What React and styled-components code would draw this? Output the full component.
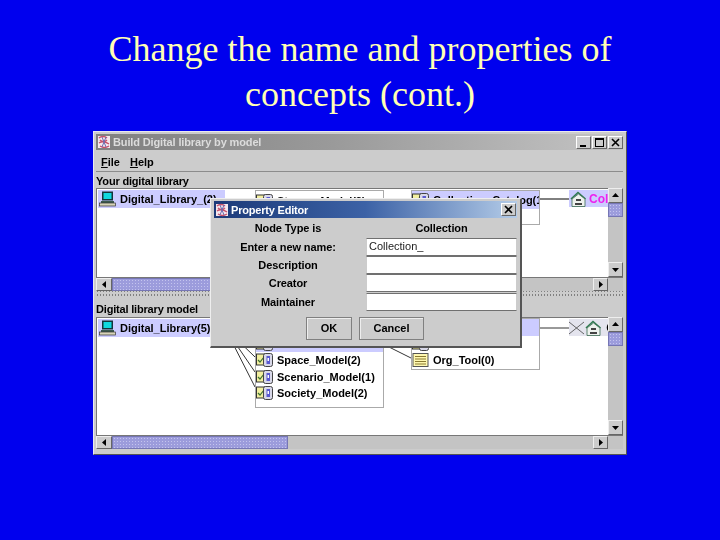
import React from "react";
import styled, { createGlobalStyle } from "styled-components";

const Global = createGlobalStyle`
  html, body { margin: 0; padding: 0; background: #0000ee; }
`;

const Slide = styled.div`
  width: 720px; height: 540px; background: #0000ee; overflow: hidden;
  display: flex; flex-direction: column; align-items: center;
`;
const Heading = styled.h1`
  margin: 27px 0 0; height: 104px; width: 720px; text-align: center;
  font: 400 36px/45px "Liberation Serif", serif; color: #ffffb4;
`;
const Win = styled.div`
  position: relative; box-sizing: border-box; width: 534px; height: 324px;
  padding: 2px 3px 3px 2px; background: #cccccc;
  border-top: 1px solid #e8e8f0; border-left: 1px solid #e8e8f0;
  border-right: 1px solid #555; border-bottom: 1px solid #555;
  display: flex; flex-direction: column;
  font-family: "Liberation Sans", Arial, sans-serif; color: #000;
  filter: blur(0.3px);
`;
const TitleBar = styled.div`
  height: 16px; flex: none; display: flex; align-items: center; gap: 1px; padding-left: 1px;
  background: linear-gradient(90deg, #808080 0%, #9a9a9a 45%, #c4c4c4 100%);
  color: #dcdcdc; font-size: 11px; font-weight: 700;
`;
const TitleText = styled.span`flex: 1; white-space: nowrap; margin-left: 1px; letter-spacing: -0.13px;`;
const WinBtn = styled.span`
  box-sizing: border-box; width: 15px; height: 13px; flex: none;
  background: #cccccc; border: 1px solid; border-color: #fff #666 #666 #fff;
  display: flex; align-items: center; justify-content: center;
`;
const MenuBar = styled.div`
  height: 22px; flex: none; display: flex; align-items: center; gap: 10px; padding: 2px 0 0 5px;
  font-size: 11px; font-weight: 700; box-sizing: border-box; border-bottom: 1px solid #8c8c8c;
`;
const MenuItem = styled.span`&::first-letter { text-decoration: underline; }`;
const Section = styled.div`flex: none; display: flex; flex-direction: column;`;
const SectionLabel = styled.div`
  box-sizing: border-box; height: ${p => p.$h}px; padding-top: ${p => p.$top || 0}px;
  display: flex; align-items: center;
  font-size: 11px; font-weight: 700; white-space: nowrap; letter-spacing: -0.18px;
`;
const PaneRow = styled.div`display: flex; height: ${p => p.$h}px;`;
const Canvas = styled.div`
  position: relative; flex: 1; background: #fff; overflow: hidden;
  border-top: 1px solid #777; border-left: 1px solid #777;
`;
const VBar = styled.div`
  width: 15px; flex: none; display: flex; flex-direction: column; background: #c4c4c4;
`;
const HBar = styled.div`height: 14px; box-sizing: border-box; display: flex; background: #c4c4c4; border-top: 1px solid #777;`;
const Arrow = styled.span`
  box-sizing: border-box; width: ${p => p.$w}px; height: ${p => p.$hh}px; flex: none;
  background: #cccccc; border: 1px solid; border-color: #eee #666 #666 #eee;
  display: flex; align-items: center; justify-content: center;
`;
const Corner = styled.span`width: 15px; flex: none;`;
const Track = styled.div`flex: 1; display: flex; flex-direction: ${p => (p.$v ? "column" : "row")};`;
const Thumb = styled.div`
  flex: none; width: ${p => (p.$v ? "auto" : p.$len + "px")};
  height: ${p => (p.$v ? p.$len + "px" : "auto")};
  background-color: #9c9cdc;
  background-image: radial-gradient(#c4c4ee 0.6px, transparent 0.8px);
  background-size: 3px 3px;
  border: 1px solid #7676b4; box-sizing: border-box;
`;
const Divider = styled.div`
  height: ${p => p.$h}px; flex: none; background-color: #cccccc;
  background-image: radial-gradient(#808080 0.7px, transparent 0.9px);
  background-size: 3px 5px; background-position: 0 2px;
`;
const Node = styled.div`
  position: absolute; box-sizing: border-box; left: ${p => p.$x}px; top: ${p => p.$y}px; width: ${p => p.$w}px;
  height: ${p => p.$h}px; background: ${p => p.$bg || "#fff"};
  border: ${p => (p.$plain ? "none" : "1px solid #aaa")}; overflow: hidden;
`;
const Row = styled.div`
  height: ${p => p.$h || 16.5}px; display: flex; align-items: center; gap: ${p => p.$gap ?? 3}px; white-space: nowrap;
  font-size: ${p => p.$fs || 11}px; font-weight: 700; padding-left: ${p => p.$pad || 0}px;
  background: ${p => (p.$on ? "#ccccff" : "transparent")}; color: ${p => p.$c || "#000"};
`;
const Wires = styled.svg`position: absolute; left: 0; top: 0; width: 100%; height: 100%;`;
const Dialog = styled.div`
  position: absolute; left: 116px; top: 66px; width: 312px; height: 150px; box-sizing: border-box;
  background: #cccccc; padding: 2px 3px 0;
  border-top: 1px solid #eee; border-left: 1px solid #eee; border-right: 2px solid #555; border-bottom: 2px solid #555;
  font-family: "Liberation Sans", Arial, sans-serif; display: flex; flex-direction: column;
`;
const DialogTitle = styled.div`
  height: 17px; flex: none; display: flex; align-items: center; gap: 2px; padding: 0 1px 0 1px;
  background: linear-gradient(90deg, #1c3a78 0%, #3c62a6 50%, #b4cce8 100%);
  color: #fff; font-size: 11px; font-weight: 700;
`;
const DialogName = styled.span`flex: 1; letter-spacing: -0.2px;`;
const Grid = styled.div`
  display: grid; grid-template-columns: 152px 151px; grid-auto-rows: 18.4px;
  font-size: 11px; font-weight: 700; margin-top: 1px; align-items: center; text-align: center;
`;
const Lbl = styled.div`white-space: nowrap; letter-spacing: -0.1px; padding-right: 4px;`;
const LblValue = styled.div`white-space: nowrap; letter-spacing: -0.1px; margin-top: -1px;`;
const Field = styled.div`
  box-sizing: border-box; height: 18px; background: #fff; border: 1px solid;
  border-color: #707070 #ccc #707070 #ccc; font-weight: 400; font-size: 11px; text-align: left; padding: 0 0 0 2px;
  color: #222; line-height: 15px;
`;
const Buttons = styled.div`display: flex; gap: 7px; margin: 6px 0 0 92px;`;
const Btn = styled.div`
  box-sizing: border-box; height: 23px; width: ${p => p.$w}px; display: flex; align-items: center; justify-content: center;
  border: 1px solid #808080; box-shadow: inset 1px 1px 0 #eee; font-size: 11px; font-weight: 700; background: #cccccc;
`;

const AppIcon = ({ s = 14 }) => (
  <svg width={s} height={s} viewBox="0 0 14 14" style={{ flex: "none" }}>
    <rect x="1" y="1" width="12" height="12" fill="#f4e8ee" />
    <path d="M2 3c2-2 6-2 8 0M3 5c2 2 5 2 7 0M2 8c3-2 7-1 10 1M3 11c3 2 6 2 9 0" stroke="#c8506a" strokeWidth="1.4" fill="none" />
    <path d="M5 2l4 10M9 2L5 12" stroke="#6a6ab0" strokeWidth="1" />
  </svg>
);
const Computer = () => (
  <svg width="17" height="16" viewBox="0 0 17 16" style={{ flex: "none" }}>
    <rect x="3" y="0.5" width="11" height="9" fill="#14343c" />
    <rect x="4.5" y="2" width="8" height="6" fill="#10d8e0" />
    <rect x="2" y="10" width="13" height="2" fill="#3c5a50" />
    <rect x="0.5" y="12" width="16" height="3" fill="#d8d4b8" stroke="#333" strokeWidth="0.7" />
  </svg>
);
const Folder = () => (
  <svg width="18" height="16" viewBox="0 0 18 16" style={{ flex: "none" }}>
    <rect x="0.5" y="2" width="9" height="11" fill="#f2efa0" stroke="#333" />
    <path d="M2 8l2 2 4-5" stroke="#3c7030" strokeWidth="1.2" fill="none" />
    <rect x="7.5" y="1.5" width="9" height="13" rx="2" fill="#d8d8e8" stroke="#444" />
    <rect x="10.5" y="4" width="3.5" height="8" fill="#5a5ad0" />
    <rect x="11.5" y="6" width="1.5" height="3" fill="#fff" />
  </svg>
);
const Note = () => (
  <svg width="17" height="16" viewBox="0 0 17 16" style={{ flex: "none" }}>
    <rect x="1" y="1.5" width="15" height="13" fill="#fff8b0" stroke="#555" />
    <path d="M3 4.5h11M3 7h11M3 9.5h11M3 12h11" stroke="#8a7a30" />
  </svg>
);
const House = () => (
  <svg width="17" height="16" viewBox="0 0 17 16" style={{ flex: "none" }}>
    <path d="M1 8L8 1.5 15.5 8" fill="none" stroke="#2f7a50" strokeWidth="1.6" />
    <path d="M2 8v7.5h13V8L8.5 3z" fill="#eef2ee" stroke="#3a6a50" strokeWidth=".8" />
    <rect x="6" y="8" width="5" height="2" fill="#444" />
    <rect x="5" y="12" width="7" height="2" fill="#444" />
  </svg>
);
const Cross = () => (
  <svg width="15" height="14" viewBox="0 0 15 14" style={{ flex: "none" }}>
    <path d="M0 1l15 12M15 1L0 13" stroke="#444" strokeWidth="0.8" />
  </svg>
);
const CloseGlyph = () => (
  <svg width="9" height="9" viewBox="0 0 9 9">
    <path d="M1 1l7 7M8 1L1 8" stroke="#000" strokeWidth="1.6" />
  </svg>
);
const Tri = ({ d }) => {
  const pts = { l: "6,1 2,4.5 6,8", r: "3,1 7,4.5 3,8", u: "1,6 4.5,2 8,6", n: "1,3 8,3 4.5,7" }[d];
  return (
    <svg width="9" height="9" viewBox="0 0 9 9">
      <polygon points={pts} fill="#000" />
    </svg>
  );
};

const HScroll = () => (
  <HBar>
    <Arrow $w={16} $hh={13}><Tri d="l" /></Arrow>
    <Track>
      <Thumb $len={176} />
    </Track>
    <Arrow $w={15} $hh={13}><Tri d="r" /></Arrow>
    <Corner />
  </HBar>
);
const VScroll = () => (
  <VBar>
    <Arrow $w={15} $hh={15}><Tri d="u" /></Arrow>
    <Track $v>
      <Thumb $v $len={14} />
    </Track>
    <Arrow $w={15} $hh={15}><Tri d="n" /></Arrow>
  </VBar>
);

export default function App() {
  return (
    <Slide>
      <Global />
      <Heading>Change the name and properties of<br />concepts (cont.)</Heading>
      <Win>
        <TitleBar>
          <AppIcon />
          <TitleText>Build Digital library by model</TitleText>
          <WinBtn><svg width="9" height="9" viewBox="0 0 9 9"><rect x="1" y="7" width="6" height="2" fill="#000" /></svg></WinBtn>
          <WinBtn><svg width="9" height="9" viewBox="0 0 9 9"><rect x="0.5" y="0.5" width="8" height="8" fill="none" stroke="#000" /><rect x="0" y="0" width="9" height="2" fill="#000" /></svg></WinBtn>
          <WinBtn><CloseGlyph /></WinBtn>
        </TitleBar>
        <MenuBar><MenuItem>File</MenuItem><MenuItem>Help</MenuItem></MenuBar>
        <Section>
          <SectionLabel $h={16} $top={2}>Your digital library</SectionLabel>
          <PaneRow $h={89}>
            <Canvas>
              <Wires>
                <path d="M443 10H472" stroke="#000" />
              </Wires>
              <Node $plain $x={1} $y={1} $w={127} $h={18}>
                <Row $on $h={18} $pad={1} $gap={4}><Computer /><span>Digital_Library_(2)</span></Row>
              </Node>
              <Node $x={158} $y={1} $w={129} $h={36}>
                <Row $h={19}><Folder /><span>Stream_Model(2)</span></Row>
              </Node>
              <Node $x={314} $y={1} $w={129} $h={35}>
                <Row $on $h={18}><Folder /><span>Collection_Catalog(1)</span></Row>
              </Node>
              <Node $plain $x={472} $y={1} $w={39} $h={17}>
                <Row $on $h={17} $pad={1} $gap={2} $fs={12} $c="#ee22ee"><House /><span>Collection</span></Row>
              </Node>
            </Canvas>
            <VScroll />
          </PaneRow>
          <HScroll />
        </Section>
        <Divider $h={5} />
        <Section>
          <SectionLabel $h={21} $top={5}>Digital library model</SectionLabel>
          <PaneRow $h={118}>
            <Canvas>
              <Wires>
                <path d="M128 10L158 39M128 10L158 54M128 10L158 69M260 13L314 40M443 10H472" stroke="#000" strokeWidth="0.8" fill="none" />
              </Wires>
              <Node $plain $x={1} $y={1} $w={127} $h={18}>
                <Row $on $h={18} $pad={1} $gap={4}><Computer /><span>Digital_Library(5)</span></Row>
              </Node>
              <Node $x={158} $y={0} $w={129} $h={90}>
                <Row />
                <Row $on><Folder /></Row>
                <Row><Folder /><span>Space_Model(2)</span></Row>
                <Row><Folder /><span>Scenario_Model(1)</span></Row>
                <Row><Folder /><span>Society_Model(2)</span></Row>
              </Node>
              <Node $x={314} $y={0} $w={129} $h={52}>
                <Row $on />
                <Row><Folder /></Row>
                <Row $gap={4}><Note /><span>Org_Tool(0)</span></Row>
              </Node>
              <Node $plain $bg="#e4e4ee" $x={472} $y={1} $w={39} $h={17}>
                <Row $h={17} $gap={1} $fs={12}><Cross /><House /><span>&nbsp;Collection</span></Row>
              </Node>
            </Canvas>
            <VScroll />
          </PaneRow>
          <HScroll />
        </Section>
        <Dialog>
          <DialogTitle>
            <AppIcon s={14} />
            <DialogName>Property Editor</DialogName>
            <WinBtn><CloseGlyph /></WinBtn>
          </DialogTitle>
          <Grid>
            <Lbl>Node Type is</Lbl><LblValue>Collection</LblValue>
            <Lbl>Enter a new name:</Lbl><Field>Collection_</Field>
            <Lbl>Description</Lbl><Field />
            <Lbl>Creator</Lbl><Field />
            <Lbl>Maintainer</Lbl><Field />
          </Grid>
          <Buttons>
            <Btn $w={46}>OK</Btn>
            <Btn $w={65}>Cancel</Btn>
          </Buttons>
        </Dialog>
      </Win>
    </Slide>
  );
}
